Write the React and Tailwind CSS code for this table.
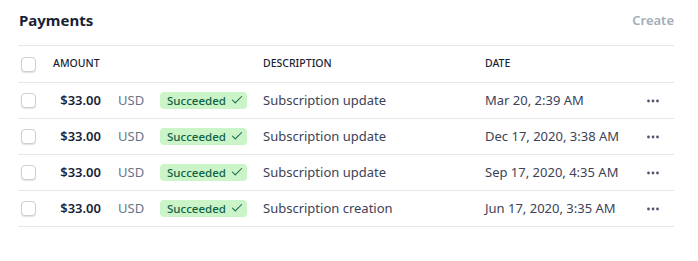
import { Check } from "lucide-react";

const payments = [
  { amount: "$33.00", currency: "USD", description: "Subscription update", date: "Mar 20, 2:39 AM" },
  { amount: "$33.00", currency: "USD", description: "Subscription update", date: "Dec 17, 2020, 3:38 AM" },
  { amount: "$33.00", currency: "USD", description: "Subscription update", date: "Sep 17, 2020, 4:35 AM" },
  { amount: "$33.00", currency: "USD", description: "Subscription creation", date: "Jun 17, 2020, 3:35 AM" },
];

function Checkbox() {
  return (
    <span className="block w-[15px] h-[15px] rounded-[4px] bg-white border border-[#c9d0d8] shadow-[0_1px_1px_rgba(0,0,0,0.12)]" />
  );
}

function MoreDots() {
  return (
    <svg width="12" height="4" viewBox="0 0 12 4" className="text-[#4f566b]">
      <circle cx="1.5" cy="2" r="1.4" fill="currentColor" />
      <circle cx="6" cy="2" r="1.4" fill="currentColor" />
      <circle cx="10.5" cy="2" r="1.4" fill="currentColor" />
    </svg>
  );
}

export default function App() {
  return (
    <div
      className="w-[698px] h-[261px] bg-white pl-[18px] pr-[24px] text-[#3c4257]"
      style={{ fontFamily: '"Noto Sans", "Open Sans", sans-serif' }}
    >
      <div className="flex items-center justify-between h-[41px] mb-[4px]">
        <h2 className="text-[15px] font-bold text-[#1a1f36] pl-[1px]">Payments</h2>
        <button type="button" className="text-[13px] font-semibold text-[#a3acb9]">
          Create
        </button>
      </div>

      <div className="flex items-center h-[38px] border-y border-[#e3e8ee] text-[10.5px] font-medium uppercase text-[#1a1f36]">
        <div className="w-[35px] pl-[3px]">
          <Checkbox />
        </div>
        <div className="w-[210px]">Amount</div>
        <div className="w-[222px]">Description</div>
        <div className="flex-1">Date</div>
      </div>

      {payments.map((p, i) => (
        <div
          key={i}
          className="flex items-center h-[36px] border-b border-[#e3e8ee] text-[13px]"
        >
          <div className="w-[35px] pl-[3px]">
            <Checkbox />
          </div>
          <div className="w-[48px] text-right font-semibold text-[#1a1f36]">{p.amount}</div>
          <div className="w-[42px] ml-[17px] text-[#697386]">{p.currency}</div>
          <div className="w-[103px]">
            <span className="inline-flex items-center gap-[4px] w-[87px] h-[17px] pl-[7px] rounded-[4px] bg-[#cbf4c9] text-[11.5px] font-medium text-[#0e6245]">
              Succeeded
              <Check size={14} strokeWidth={1.75} />
            </span>
          </div>
          <div className="w-[222px]">{p.description}</div>
          <div className="flex-1">{p.date}</div>
          <div className="pr-[15px] flex items-center">
            <MoreDots />
          </div>
        </div>
      ))}
    </div>
  );
}
